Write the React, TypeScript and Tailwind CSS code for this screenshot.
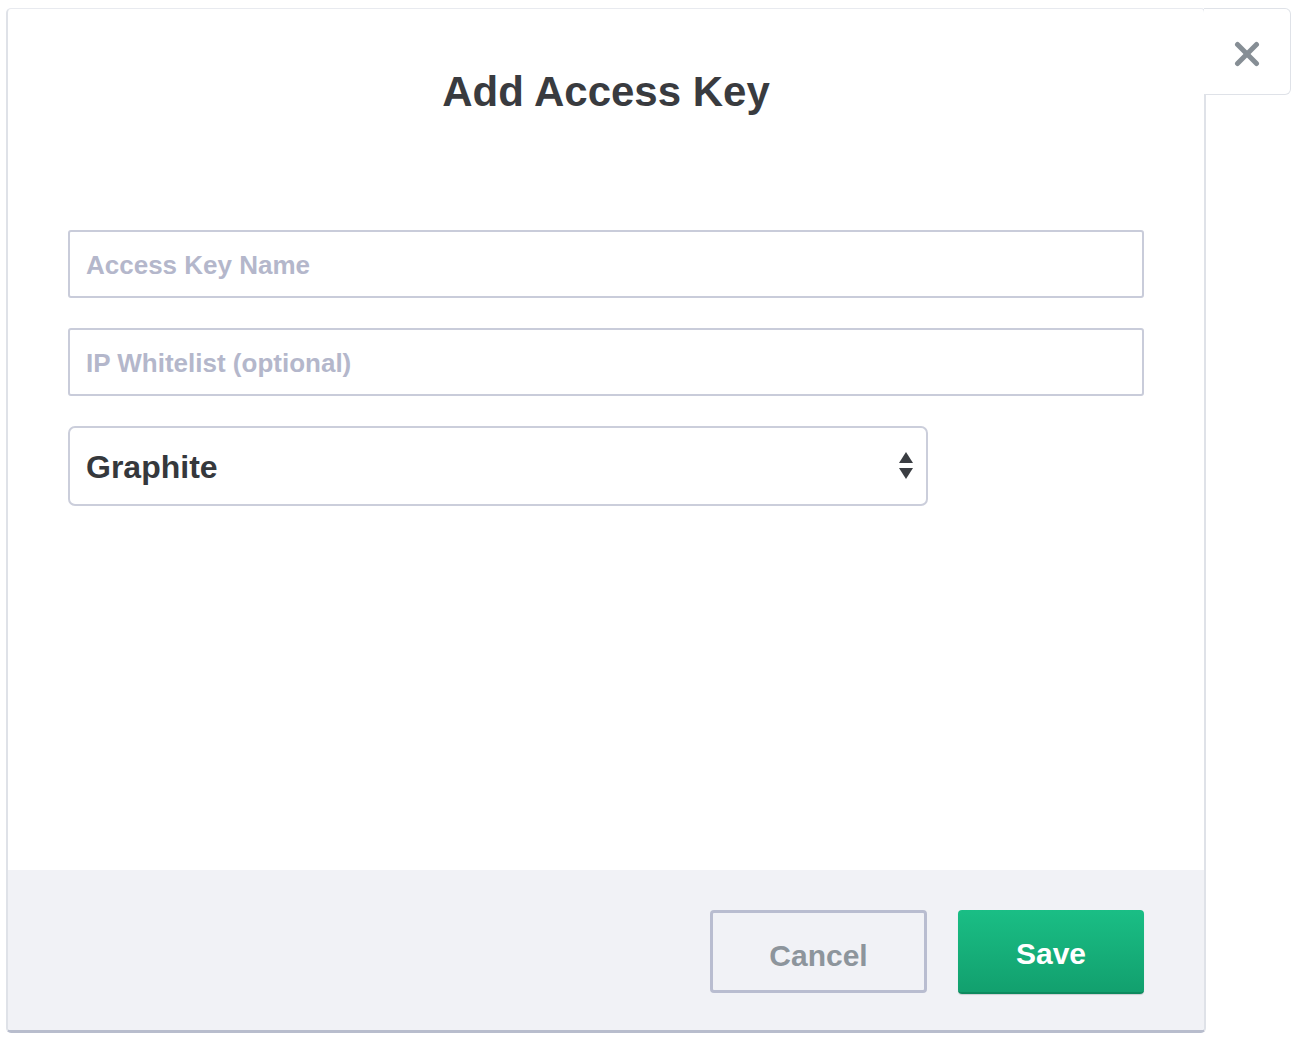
import React from "react";

export default function App() {
  return (
    <div className="min-h-[1042px] w-[1304px] bg-white pt-[8px] pl-[6px] flex items-start font-['Liberation_Sans',Arial,sans-serif]">
      <div className="w-[1200px] h-[1025px] flex flex-col bg-white border-x-2 border-t border-b-[3px] border-x-[#dfe2e8] border-t-[#e8eaef] border-b-[#b8bdcd] rounded-[5px] overflow-hidden">
        <h1 className="mt-[59px] text-center text-[42px] leading-[48px] font-bold text-[#393b3f]">
          Add Access Key
        </h1>
        <div className="mt-[114px] px-[60px] flex flex-col gap-[30px]">
          <input
            className="h-[68px] w-full rounded-[3px] border-2 border-[#c9ccda] pl-[16px] pt-[2px] text-[26px] font-bold text-[#393b3f] outline-none placeholder:text-[#b4b7cb] placeholder:font-bold"
            placeholder="Access Key Name"
          />
          <input
            className="h-[68px] w-full rounded-[3px] border-2 border-[#c9ccda] pl-[16px] pt-[2px] text-[26px] font-bold text-[#393b3f] outline-none placeholder:text-[#b4b7cb] placeholder:font-bold"
            placeholder="IP Whitelist (optional)"
          />
          <div className="h-[80px] w-[860px] rounded-[7px] border-2 border-[#cbcedb] pl-[16px] pr-[12px] flex items-center justify-between">
            <span className="text-[32px] font-bold text-[#35383c] pt-[2px]">Graphite</span>
            <svg width="16" height="30" viewBox="0 0 16 30" className="text-[#3a3d42]">
              <polygon points="8,1 15,12 1,12" fill="currentColor" />
              <polygon points="1,17 15,17 8,28" fill="currentColor" />
            </svg>
          </div>
        </div>
        <div className="mt-auto h-[160px] bg-[#f1f2f6] pt-[40px] pr-[60px] flex items-start justify-end gap-[31px]">
          <button className="w-[217px] h-[83px] rounded-[4px] border-[3px] border-[#b9bdd0] bg-transparent text-[30px] font-bold text-[#8d959c] flex items-center justify-center pt-[7px]">
            Cancel
          </button>
          <button className="w-[186px] h-[84px] rounded-[4px] border-b-2 border-[#0e8a5e] bg-gradient-to-b from-[#1abe85] to-[#12a06e] text-[30px] font-bold text-white flex items-center justify-center pt-[4px] shadow-[0_1px_1px_rgba(0,0,0,0.15)]">
            Save
          </button>
        </div>
      </div>
      <div className="-ml-[2px] relative z-10 w-[87px] h-[87px] bg-white border border-l-0 border-[#dfe2e8] rounded-r-[6px] flex items-center justify-center pt-[4px]">
        <svg width="26" height="26" viewBox="0 0 26 26">
          <line x1="3.5" y1="3.5" x2="22.5" y2="22.5" stroke="#868e95" strokeWidth="5" strokeLinecap="round" />
          <line x1="22.5" y1="3.5" x2="3.5" y2="22.5" stroke="#868e95" strokeWidth="5" strokeLinecap="round" />
        </svg>
      </div>
    </div>
  );
}
